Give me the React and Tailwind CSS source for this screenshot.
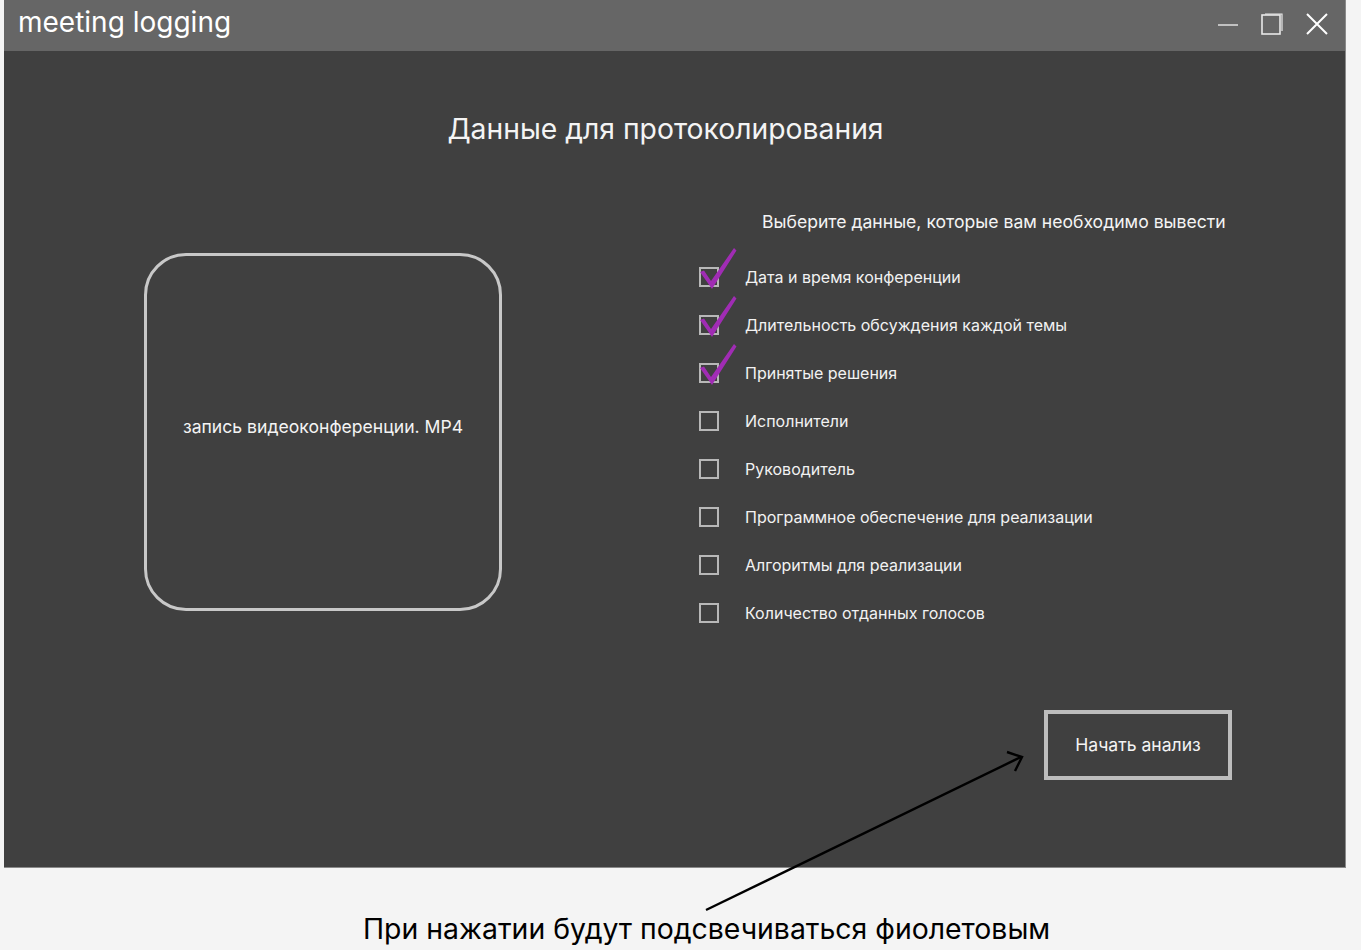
const items = [
  { label: "Дата и время конференции", checked: true },
  { label: "Длительность обсуждения каждой темы", checked: true },
  { label: "Принятые решения", checked: true },
  { label: "Исполнители", checked: false },
  { label: "Руководитель", checked: false },
  { label: "Программное обеспечение для реализации", checked: false },
  { label: "Алгоритмы для реализации", checked: false },
  { label: "Количество отданных голосов", checked: false },
]

function CheckRow({ label, checked }) {
  return (
    <div className="flex h-[48px] items-center">
      <div className="relative h-[20px] w-[20px] border-2 border-[#b8b8b8]">
        {checked && (
          <svg className="absolute left-[-2px] top-[-22px]" width="40" height="44" viewBox="0 0 40 44" fill="none">
            <path d="M1 25 L5 23.5 L12 34 L35 1 L37.5 3.5 L13 42 Z" fill="#a02cb4" />
          </svg>
        )}
      </div>
      <span className="ml-[26px] text-[16px] text-[#f2f2f2]">{label}</span>
    </div>
  )
}

export default function App() {
  return (
    <div className="relative min-h-[950px] bg-[#f4f4f4] font-['Inter','Noto_Sans',sans-serif]">
      <div className="ml-[4px] flex h-[868px] w-[1342px] flex-col border-r border-b border-[#8a8a8a] bg-[#404040]">
        <div className="flex h-[51px] items-center bg-[#666666] pl-[14px]">
          <span className="pb-[8px] text-[28px] leading-none text-white">meeting logging</span>
          <div className="ml-auto mr-[16px] flex items-center gap-[22px] pb-[4px]">
            <svg width="22" height="22" viewBox="0 0 22 22" fill="none">
              <path d="M1 12 H21" stroke="#e0e0e0" strokeWidth="1.5" />
            </svg>
            <svg width="22" height="24" viewBox="0 0 22 24" fill="none">
              <rect x="1" y="3" width="18" height="19" stroke="#e8e8e8" strokeWidth="1.6" />
              <path d="M4 2 H21 V19" stroke="#e8e8e8" strokeWidth="1.2" />
            </svg>
            <svg width="24" height="24" viewBox="0 0 24 24" fill="none">
              <path d="M2 2 L22 22 M22 2 L2 22" stroke="#ffffff" strokeWidth="2" />
            </svg>
          </div>
        </div>
        <div className="flex-1">
          <h1 className="mt-[61px] pr-[18px] text-center text-[28.3px] leading-[34px] text-[#f4f4f4]">
            Данные для протоколирования
          </h1>
          <div className="mt-[65px] flex">
            <div className="ml-[140px] pt-[42px]">
              <div className="flex h-[358px] w-[358px] items-center justify-center rounded-[42px] border-[3px] border-[#c8c8c8] pb-[10px]">
                <span className="text-[17.6px] text-[#f4f4f4]">запись видеоконференции. MP4</span>
              </div>
            </div>
            <div className="ml-[197px]">
              <p className="ml-[63px] text-[17.6px] leading-[22px] text-[#f4f4f4]">
                Выберите данные, которые вам необходимо вывести
              </p>
              <div className="mt-[20px]">
                {items.map((it) => (
                  <CheckRow key={it.label} {...it} />
                ))}
              </div>
              <button className="ml-[345px] mt-[73px] flex h-[70px] w-[188px] items-center justify-center border-4 border-[#bdbdbd] text-[17.6px] text-[#f4f4f4]">
                Начать анализ
              </button>
            </div>
          </div>
        </div>
      </div>
      <p className="ml-[363px] mt-[44px] text-[28.4px] leading-[34px] text-black">
        При нажатии будут подсвечиваться фиолетовым
      </p>
      <svg className="pointer-events-none absolute left-0 top-0" width="1361" height="950" fill="none">
        <path d="M706 910 L1021 757" stroke="#000" strokeWidth="2.4" />
        <path d="M1007 752 L1022 757 L1015 771" stroke="#000" strokeWidth="2.4" strokeLinejoin="miter" />
      </svg>
    </div>
  )
}
